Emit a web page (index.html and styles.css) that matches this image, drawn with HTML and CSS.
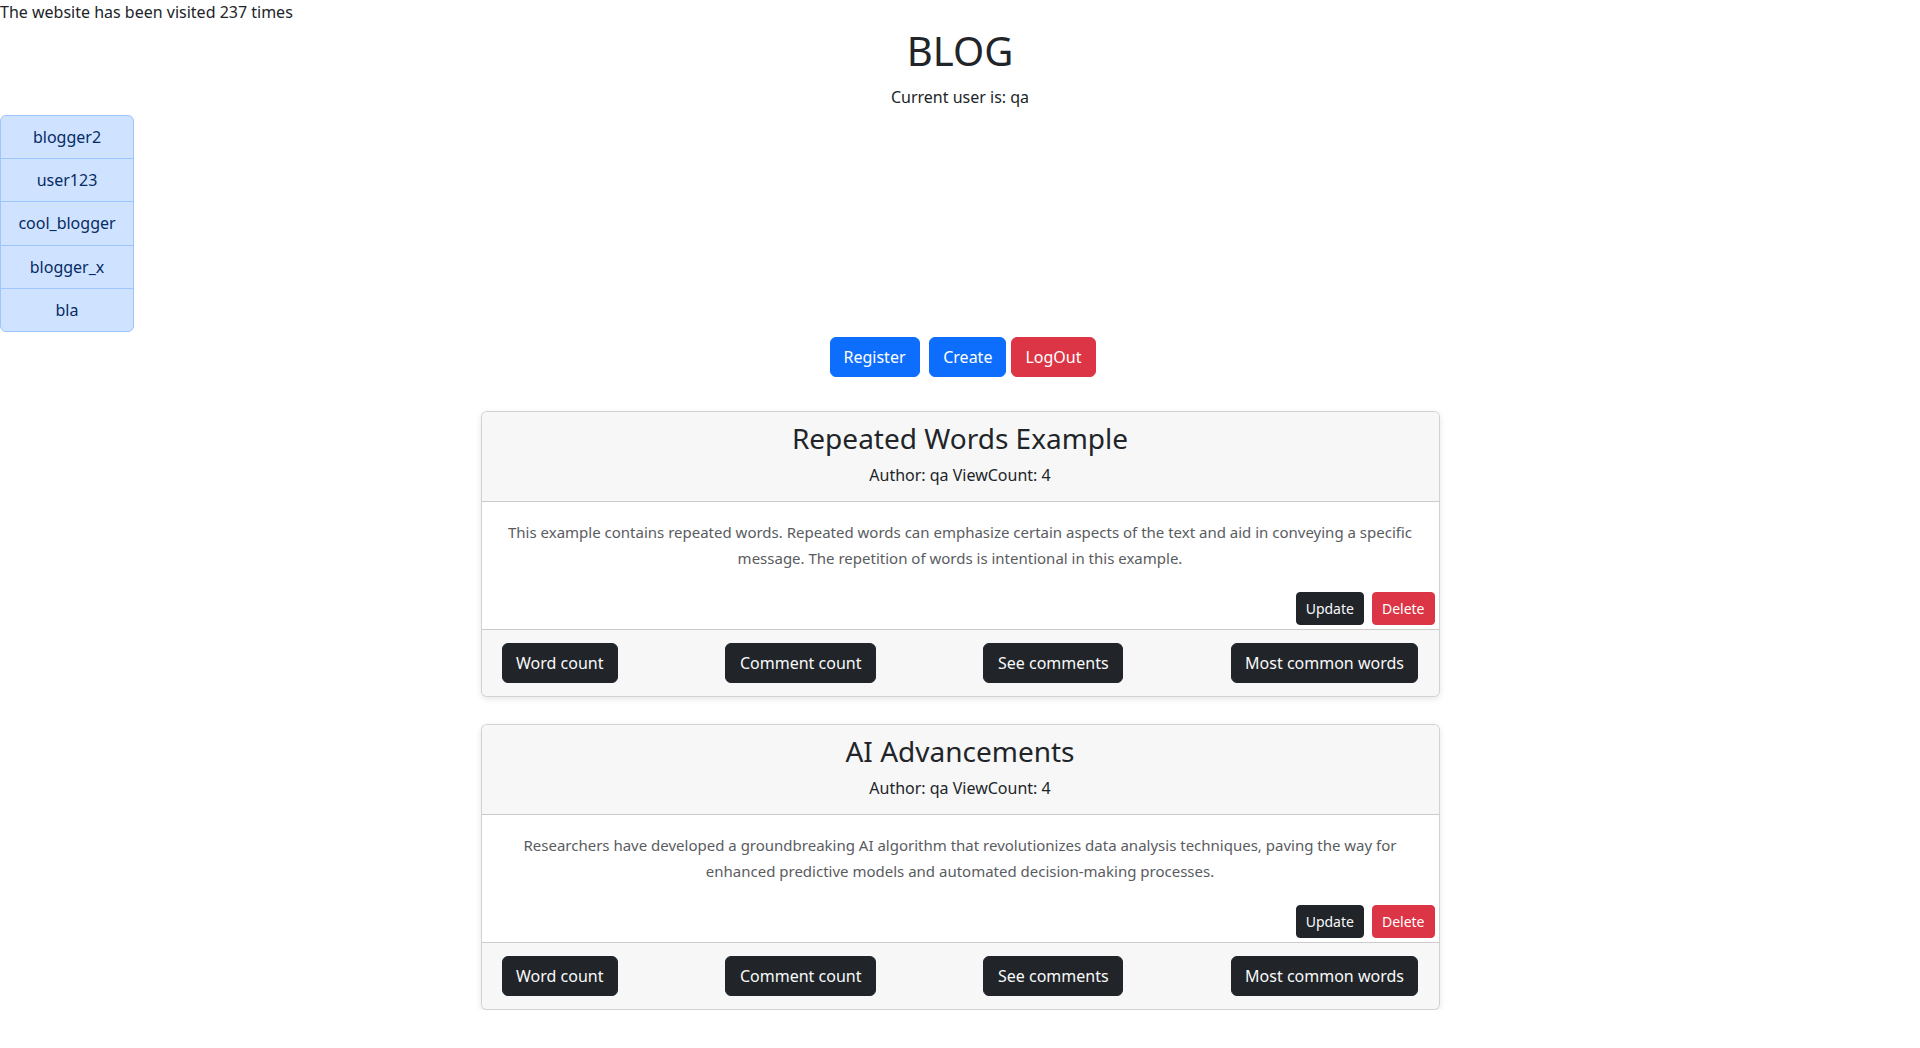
FILE: index.html
```html
<!DOCTYPE html>
<html lang="en">
<head>
<meta charset="utf-8">
<title>BLOG</title>
<link rel="stylesheet" href="styles.css">
</head>
<body>
<div class="visits">The website has been visited 237 times</div>
<header class="top">
  <h1 class="site-title">BLOG</h1>
  <p class="current-user">Current user is: qa</p>
</header>
<ul class="users">
  <li class="user-item">blogger2</li>
  <li class="user-item">user123</li>
  <li class="user-item">cool_blogger</li>
  <li class="user-item">blogger_x</li>
  <li class="user-item">bla</li>
</ul>
<nav class="actions">
  <button class="btn btn-primary btn-register">Register</button>
  <button class="btn btn-primary btn-create">Create</button>
  <button class="btn btn-danger">LogOut</button>
</nav>
<main class="posts">
  <article class="card">
    <div class="card-header">
      <h3 class="card-title">Repeated Words Example</h3>
      <p class="card-meta">Author: qa ViewCount: 4</p>
    </div>
    <div class="card-body">
      <p class="card-text">This example contains repeated words. Repeated words can emphasize certain aspects of the text and aid in conveying a specific message. The repetition of words is intentional in this example.</p>
      <div class="card-tools">
        <button class="btn btn-dark btn-sm">Update</button>
        <button class="btn btn-danger btn-sm">Delete</button>
      </div>
    </div>
    <div class="card-footer">
      <button class="btn btn-dark btn-wide">Word count</button>
      <button class="btn btn-dark btn-wide">Comment count</button>
      <button class="btn btn-dark btn-wide">See comments</button>
      <button class="btn btn-dark btn-wide">Most common words</button>
    </div>
  </article>
  <article class="card">
    <div class="card-header">
      <h3 class="card-title">AI Advancements</h3>
      <p class="card-meta">Author: qa ViewCount: 4</p>
    </div>
    <div class="card-body">
      <p class="card-text">Researchers have developed a groundbreaking AI algorithm that revolutionizes data analysis techniques, paving the way for enhanced predictive models and automated decision-making processes.</p>
      <div class="card-tools">
        <button class="btn btn-dark btn-sm">Update</button>
        <button class="btn btn-danger btn-sm">Delete</button>
      </div>
    </div>
    <div class="card-footer">
      <button class="btn btn-dark btn-wide">Word count</button>
      <button class="btn btn-dark btn-wide">Comment count</button>
      <button class="btn btn-dark btn-wide">See comments</button>
      <button class="btn btn-dark btn-wide">Most common words</button>
    </div>
  </article>
</main>
</body>
</html>
```
FILE: styles.css
```css
* { box-sizing: border-box; }
html, body { margin: 0; padding: 0; }
body {
  font-family: "Noto Sans", "Liberation Sans", Arial, sans-serif;
  font-size: 16px;
  line-height: 1.5;
  color: #212529;
  background: #fff;
}
.visits { line-height: 24px; }
.top { text-align: center; }
.site-title {
  font-size: 40px;
  font-weight: 400;
  line-height: 1.2;
  margin: 3px 0 9.5px;
}
.current-user { margin: 0 0 6px; }
.users {
  list-style: none;
  margin: 0;
  padding: 0;
  width: 134px;
  display: flex;
  flex-direction: column;
}
.user-item {
  background: #cfe2ff;
  color: #052c65;
  border: 1px solid #9ec5fe;
  padding: 9.2px 16px;
  text-align: center;
  line-height: 24px;
}
.user-item + .user-item { margin-top: -1px; }
.user-item:first-child { border-radius: 6px 6px 0 0; }
.user-item:last-child { border-radius: 0 0 6px 6px; }
.actions {
  display: flex;
  justify-content: center;
  margin-top: 5px;
  padding-left: 5px;
}
.btn {
  font-family: inherit;
  font-size: 16px;
  line-height: 24px;
  padding: 7px 13px;
  border: 1px solid transparent;
  border-radius: 6px;
  color: #fff;
  cursor: pointer;
}
.btn-primary { background: #0d6efd; border-color: #0d6efd; }
.btn-danger { background: #dc3545; border-color: #dc3545; }
.btn-dark { background: #212529; border-color: #212529; color: #f8f9fa; }
.btn-register { margin-right: 9.7px; }
.btn-create { margin-right: 5px; }
.btn-sm {
  font-size: 14px;
  line-height: 21px;
  padding: 5px 9px;
  border-radius: 4px;
}
.btn-wide { padding: 7px 13.5px; }
.posts {
  display: flex;
  flex-direction: column;
  align-items: center;
  gap: 27px;
  margin-top: 34px;
}
.card {
  width: 959px;
  border: 1px solid rgba(0, 0, 0, 0.175);
  border-radius: 6px;
  background: #fff;
  box-shadow: 0 2px 6px rgba(0, 0, 0, 0.1);
  overflow: hidden;
}
.card-header {
  background: #f7f7f7;
  border-bottom: 1px solid rgba(0, 0, 0, 0.175);
  text-align: center;
  padding: 10px 16px 14px;
}
.card-title {
  font-size: 28px;
  font-weight: 400;
  line-height: 1.2;
  margin: 0 0 7px;
}
.card-meta { margin: 0; }
.card-body { padding: 17.5px 0 4px; }
.card-text {
  font-size: 15px;
  line-height: 26px;
  color: #595c5f;
  text-align: center;
  margin: 0 16px 20.5px;
}
.card-tools {
  display: flex;
  justify-content: flex-end;
  gap: 8px;
  padding-right: 4px;
}
.card-footer {
  background: #f7f7f7;
  border-top: 1px solid rgba(0, 0, 0, 0.175);
  display: flex;
  justify-content: space-between;
  padding: 13px 20px;
}
```
